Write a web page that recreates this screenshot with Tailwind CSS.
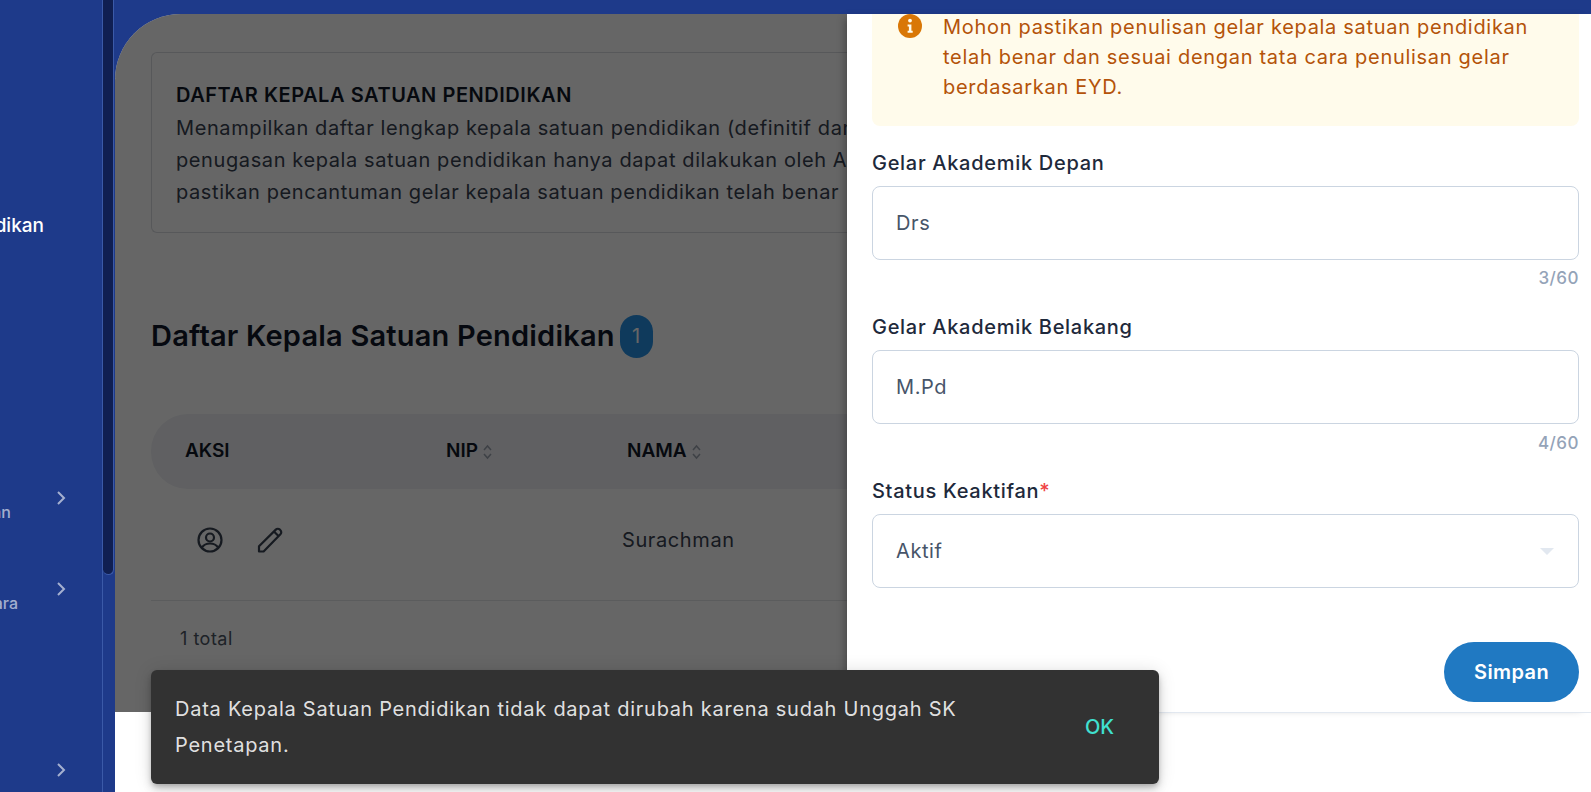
<!DOCTYPE html>
<html lang="id">
<head>
  <meta charset="UTF-8" />
  <title>Daftar Kepala Satuan Pendidikan</title>
  <script src="https://cdn.jsdelivr.net/npm/@tailwindcss/browser@4"></script>
</head>
<body class="bg-white font-['Inter',sans-serif] overflow-hidden">
  <div class="flex h-[792px] w-[1591px] overflow-hidden">

    <!-- sidebar -->
    <aside class="flex w-[115px] shrink-0 bg-[#1e3a8a]">
      <nav class="flex w-[102px] flex-col overflow-hidden text-white/60">
        <div class="mt-[207px] flex h-[36px] items-center justify-end pr-[58px] text-[19px] font-medium leading-none text-white whitespace-nowrap">dikan</div>
        <div class="mt-[246px] flex h-[18px] items-center justify-end pr-[33px]">
          <svg class="h-[16px] w-[16px]" viewBox="0 0 16 16" fill="none" stroke="currentColor" stroke-width="2"><path d="M5 2l6 6-6 6" /></svg>
        </div>
        <div class="-mt-[3px] flex h-[16px] items-center justify-end pr-[91px] text-[16px] font-medium whitespace-nowrap">an</div>
        <div class="mt-[60px] flex h-[18px] items-center justify-end pr-[33px]">
          <svg class="h-[16px] w-[16px]" viewBox="0 0 16 16" fill="none" stroke="currentColor" stroke-width="2"><path d="M5 2l6 6-6 6" /></svg>
        </div>
        <div class="-mt-[3px] flex h-[16px] items-center justify-end pr-[84px] text-[16px] font-medium whitespace-nowrap">ara</div>
        <div class="mt-[150px] flex h-[18px] items-center justify-end pr-[33px]">
          <svg class="h-[16px] w-[16px]" viewBox="0 0 16 16" fill="none" stroke="currentColor" stroke-width="2"><path d="M5 2l6 6-6 6" /></svg>
        </div>
      </nav>
      <div class="w-[13px] border-l border-[#3b5aa8]">
        <div class="h-[575px] w-[11px] rounded-b-full border-r border-b border-[#3b5aa8] bg-[#101f52]"></div>
      </div>
    </aside>

    <main class="flex min-w-0 flex-1 flex-col">
      <div class="h-[14px] shrink-0 bg-[#1e3a8a]"></div>

      <!-- page area -->
      <div class="relative flex-1 bg-white">
        <div class="absolute inset-x-0 top-0 h-[64px] bg-[#1e3a8a]"></div>
        <section class="relative h-[698px] overflow-hidden rounded-tl-[66px] bg-white pl-[36px] pt-[38px]">
          <div class="h-[181px] rounded-l-[6px] border border-r-0 border-[#d9dbe0] pl-[24px] pt-[25px] text-[20px] leading-[32px] tracking-[0.6px] whitespace-nowrap text-[#374151]">
            <h2 class="font-semibold leading-[34px] tracking-[0.55px] text-[#111827]">DAFTAR KEPALA SATUAN PENDIDIKAN</h2>
            <p>Menampilkan daftar lengkap kepala satuan pendidikan (definitif dan</p>
            <p>penugasan kepala satuan pendidikan hanya dapat dilakukan oleh Admin</p>
            <p>pastikan pencantuman gelar kepala satuan pendidikan telah benar</p>
          </div>

          <div class="mt-[81px] flex items-center gap-[5px]">
            <h1 class="text-[29px] font-semibold leading-[44px] tracking-[0.2px] text-[#0f172a]">Daftar Kepala Satuan Pendidikan</h1>
            <span class="flex h-[43px] w-[33px] items-center justify-center rounded-full bg-[#2691e6] text-[20px] text-white">1</span>
          </div>

          <div class="mt-[56px] flex h-[75px] items-center rounded-l-[37px] bg-[#eff1f5] pl-[34px] text-[19px] font-semibold text-[#111827]">
            <span class="w-[261px]">AKSI</span>
            <span class="flex w-[181px] items-center gap-[5px]">NIP
              <svg class="h-[16px] w-[9px] text-[#9ca3af]" viewBox="0 0 9 16" fill="none" stroke="currentColor" stroke-width="1.5"><path d="M1 6l3.5-4L8 6M1 10l3.5 4L8 10" /></svg>
            </span>
            <span class="flex items-center gap-[5px]">NAMA
              <svg class="h-[16px] w-[9px] text-[#9ca3af]" viewBox="0 0 9 16" fill="none" stroke="currentColor" stroke-width="1.5"><path d="M1 6l3.5-4L8 6M1 10l3.5 4L8 10" /></svg>
            </span>
          </div>

          <div class="flex h-[112px] items-center border-b border-[#e3e5e9] pb-[10px] pl-[46px] text-[20px] tracking-[0.6px] text-[#374151]">
            <svg class="h-[26px] w-[26px]" viewBox="0 0 26 26" fill="none" stroke="currentColor" stroke-width="2.2">
              <circle cx="13" cy="13" r="11.5" />
              <circle cx="13" cy="10.5" r="4" />
              <path d="M5 20.5c2-3.2 4.6-4 8-4s6 .8 8 4" />
            </svg>
            <svg class="ml-[34px] h-[26px] w-[26px]" viewBox="0 0 26 26" fill="none" stroke="currentColor" stroke-width="2.2" stroke-linejoin="round">
              <path d="M2 24.5v-5.2L18.8 2.6a2.8 2.8 0 0 1 4 0l.6.6a2.8 2.8 0 0 1 0 4L6.6 24.5z" />
              <path d="M17 4.5l4.5 4.5" />
            </svg>
            <span class="ml-[339px]">Surachman</span>
          </div>

          <p class="pl-[29px] pt-[24px] text-[18px] tracking-[0.5px] text-[#4b5563]">1 total</p>

          <div class="absolute inset-0 bg-black/60"></div>
        </section>

        <!-- drawer -->
        <aside class="absolute left-[732px] right-0 top-0 h-[699px] border-b border-[#e2e8f0] bg-white pl-[25px] pr-[12px] shadow-[-6px_0_8px_-4px_rgba(0,0,0,0.3)]">
          <div class="flex h-[112px] gap-[21px] rounded-b-[8px] bg-[#fffbeb] pl-[26px] text-[20px] leading-[30px] tracking-[0.7px] text-[#b45309]">
            <svg class="h-[24px] w-[24px] shrink-0" viewBox="0 0 24 24">
              <circle cx="12" cy="12" r="12" fill="#d97706" />
              <circle cx="12" cy="6.6" r="1.9" fill="#fffbeb" />
              <path d="M9.6 10.4h3.8v6.4h1.3v2H9.6v-2h1.3v-4.4H9.6z" fill="#fffbeb" />
            </svg>
            <p class="-mt-[2px] w-[600px]">Mohon pastikan penulisan gelar kepala satuan pendidikan telah benar dan sesuai dengan tata cara penulisan gelar berdasarkan EYD.</p>
          </div>

          <label class="mt-[24px] block text-[20px] font-medium leading-[26px] tracking-[0.7px] text-[#1e293b]">Gelar Akademik Depan</label>
          <div class="mt-[10px] flex h-[74px] items-center rounded-[8px] border border-[#cbd5e1] px-[23px] text-[20px] tracking-[0.6px] text-[#475569]">Drs</div>
          <p class="mt-[8px] text-right text-[17px] font-medium leading-[20px] tracking-[0.5px] text-[#94a3b8]">3/60</p>

          <label class="mt-[26px] block text-[20px] font-medium leading-[26px] tracking-[0.7px] text-[#1e293b]">Gelar Akademik Belakang</label>
          <div class="mt-[10px] flex h-[74px] items-center rounded-[8px] border border-[#cbd5e1] px-[23px] text-[20px] tracking-[0.6px] text-[#475569]">M.Pd</div>
          <p class="mt-[9px] text-right text-[17px] font-medium leading-[20px] tracking-[0.5px] text-[#94a3b8]">4/60</p>

          <label class="mt-[25px] block text-[20px] font-medium leading-[26px] tracking-[0.7px] text-[#1e293b]">Status Keaktifan<span class="text-[#ef4444]">*</span></label>
          <div class="mt-[10px] flex h-[74px] items-center justify-between rounded-[8px] border border-[#cbd5e1] pl-[23px] pr-[24px] text-[20px] tracking-[0.6px] text-[#475569]">
            Aktif
            <span class="h-0 w-0 border-x-[7px] border-t-[7px] border-x-transparent border-t-[#e2e8f0]"></span>
          </div>

          <div class="mt-[54px] flex justify-end">
            <button class="h-[60px] w-[135px] rounded-full bg-[#2079c2] text-[20px] font-semibold tracking-[0.4px] text-white">Simpan</button>
          </div>
        </aside>

        <!-- snackbar -->
        <div class="absolute left-[36px] top-[656px] flex h-[114px] w-[1008px] items-center rounded-[6px] bg-[#323232] pl-[24px] pr-[45px] shadow-[0_3px_5px_-1px_rgba(0,0,0,0.2),0_6px_10px_0_rgba(0,0,0,0.14),0_1px_18px_0_rgba(0,0,0,0.12)]">
          <p class="w-[800px] text-[20px] leading-[36px] tracking-[0.75px] text-white/87">Data Kepala Satuan Pendidikan tidak dapat dirubah karena sudah Unggah SK Penetapan.</p>
          <button class="ml-auto text-[20px] font-medium text-[#40e0d0]">OK</button>
        </div>
      </div>
    </main>
  </div>
</body>
</html>
